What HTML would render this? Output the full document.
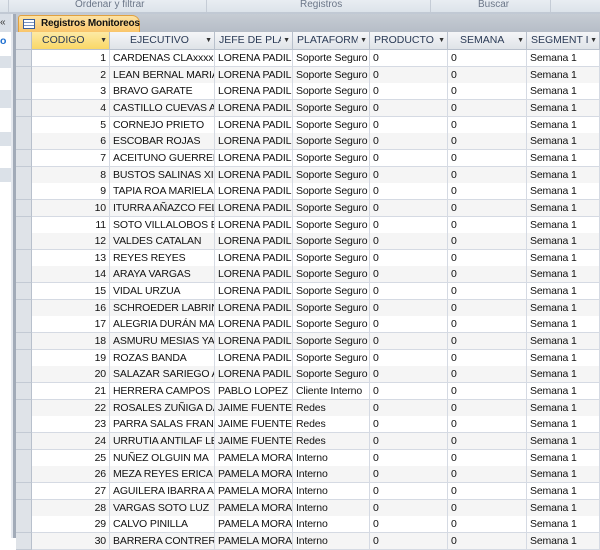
<!DOCTYPE html><html><head><style>
body{margin:0;width:600px;height:538px;overflow:hidden;background:#fff;font-family:"Liberation Sans",sans-serif;font-size:10.5px;position:relative}
div{position:absolute;box-sizing:border-box}
.rib{left:0;top:0;width:600px;height:12px;background:linear-gradient(#e9edf2,#dce3ea);color:#6b7688;font-size:10px}
.cell{height:17px;line-height:16px;border-right:1px solid #d5dae3;border-bottom:1px solid #d5dae3;white-space:nowrap;overflow:hidden;padding-left:3px;color:#111;letter-spacing:-0.15px}
.hd{top:32px;height:18px;line-height:17px;background:linear-gradient(#f5f6f8,#dfe3e8);border-right:1px solid #b8c0cc;border-bottom:1px solid #b8c0cc;color:#2a3a55;white-space:nowrap;overflow:hidden;padding-left:4px;padding-right:12px}
.ar{position:absolute;right:2px;top:0;font-size:7px;color:#333;background:inherit;padding-left:2px}
</style></head><body>
<div class="rib"><span style="position:absolute;left:75px;top:-1px">Ordenar y filtrar</span><span style="position:absolute;left:300px;top:-1px">Registros</span><span style="position:absolute;left:478px;top:-1px">Buscar</span>
<div style="left:8px;top:0;width:1px;height:12px;background:#c5ccd6"></div><div style="left:206px;top:0;width:1px;height:12px;background:#c5ccd6"></div><div style="left:430px;top:0;width:1px;height:12px;background:#c5ccd6"></div><div style="left:550px;top:0;width:1px;height:12px;background:#c5ccd6"></div></div>
<div style="left:0;top:12px;width:600px;height:2px;background:#c1c9d4"></div>
<div style="left:0;top:14px;width:11px;height:524px;background:#fff"></div>
<div style="left:0;top:14px;width:11px;height:18px;background:#d9dfe7;font-size:10px;color:#333;line-height:18px">«</div>
<div style="left:0;top:34px;width:11px;height:14px;color:#1e6fd0;font-weight:bold;line-height:14px">o</div>
<div style="left:0;top:56px;width:11px;height:12px;background:#dbe1e8"></div>
<div style="left:0;top:90px;width:11px;height:18px;background:#dbe1e8"></div>
<div style="left:0;top:132px;width:11px;height:14px;background:#dbe1e8"></div>
<div style="left:0;top:168px;width:11px;height:14px;background:#dbe1e8"></div>
<div style="left:11px;top:14px;width:2px;height:524px;background:#e4e8ee"></div>
<div style="left:13px;top:14px;width:3px;height:524px;background:#a2abb8"></div>
<div style="left:16px;top:14px;width:584px;height:18px;background:linear-gradient(#c6ccd4,#b6bdc7)"></div>
<div style="left:18px;top:15px;width:122px;height:17px;background:linear-gradient(#fde3a4,#f9c56a);border:1px solid #e0a040;border-bottom:none;border-radius:3px 8px 0 0;font-weight:bold;font-size:10px;line-height:15px;padding-left:22px;color:#111;white-space:nowrap;letter-spacing:-0.2px">Registros Monitoreos</div>
<div style="left:23px;top:19px;width:12px;height:10px;border:1px solid #3c5f9a;background:repeating-linear-gradient(#fff 0 2px,#7b95c2 2px 3px)"></div>
<div style="left:16px;top:32px;width:16px;height:18px;background:#dfe3e8;border-right:1px solid #b8c0cc;border-bottom:1px solid #b8c0cc"></div>
<div class="hd" style="left:32px;width:78px;background:linear-gradient(#fdeaa5,#f9d766);padding-left:10px">CODIGO<span class="ar">▼</span></div>
<div class="hd" style="left:110px;width:105px;padding-left:20px">EJECUTIVO<span class="ar">▼</span></div>
<div class="hd" style="left:215px;width:78px">JEFE DE PLA<span class="ar">▼</span></div>
<div class="hd" style="left:293px;width:77px">PLATAFORM<span class="ar">▼</span></div>
<div class="hd" style="left:370px;width:78px">PRODUCTO<span class="ar">▼</span></div>
<div class="hd" style="left:448px;width:79px;padding-left:12px">SEMANA<span class="ar">▼</span></div>
<div class="hd" style="left:527px;width:73px">SEGMENT ID<span class="ar">▼</span></div>
<div id="rows"></div>
<script>
var d=[["CARDENAS CLAxxxx","LORENA PADIL","Soporte Seguro"],["LEAN BERNAL MARIA","LORENA PADIL","Soporte Seguro"],["BRAVO GARATE","LORENA PADIL","Soporte Seguro"],["CASTILLO CUEVAS A","LORENA PADIL","Soporte Seguro"],["CORNEJO PRIETO","LORENA PADIL","Soporte Seguro"],["ESCOBAR ROJAS","LORENA PADIL","Soporte Seguro"],["ACEITUNO GUERRERO","LORENA PADIL","Soporte Seguro"],["BUSTOS SALINAS XI","LORENA PADIL","Soporte Seguro"],["TAPIA ROA MARIELA","LORENA PADIL","Soporte Seguro"],["ITURRA AÑAZCO FEL","LORENA PADIL","Soporte Seguro"],["SOTO VILLALOBOS E","LORENA PADIL","Soporte Seguro"],["VALDES CATALAN","LORENA PADIL","Soporte Seguro"],["REYES REYES","LORENA PADIL","Soporte Seguro"],["ARAYA VARGAS","LORENA PADIL","Soporte Seguro"],["VIDAL URZUA","LORENA PADIL","Soporte Seguro"],["SCHROEDER LABRIN","LORENA PADIL","Soporte Seguro"],["ALEGRIA DURÁN MA","LORENA PADIL","Soporte Seguro"],["ASMURU MESIAS YA","LORENA PADIL","Soporte Seguro"],["ROZAS BANDA","LORENA PADIL","Soporte Seguro"],["SALAZAR SARIEGO A","LORENA PADIL","Soporte Seguro"],["HERRERA CAMPOS","PABLO LOPEZ","Cliente Interno"],["ROSALES ZUÑIGA DA","JAIME FUENTE","Redes"],["PARRA SALAS FRAN","JAIME FUENTE","Redes"],["URRUTIA ANTILAF LE","JAIME FUENTE","Redes"],["NUÑEZ OLGUIN MA","PAMELA MORA","Interno"],["MEZA REYES ERICA D","PAMELA MORA","Interno"],["AGUILERA IBARRA A","PAMELA MORA","Interno"],["VARGAS SOTO LUZ","PAMELA MORA","Interno"],["CALVO PINILLA","PAMELA MORA","Interno"],["BARRERA CONTRERAS","PAMELA MORA","Interno"]];
var h="",cols=[[32,78],[110,105],[215,78],[293,77],[370,78],[448,79],[527,73]];
for(var i=0;i<d.length;i++){var y=50+i*16.65,t=Math.round(y),bg=i%2?"#f5f5f5":"#fff";
h+='<div style="left:16px;top:'+t+'px;width:16px;height:17px;background:#dfe3e8;border-right:1px solid #b8c0cc;border-bottom:1px solid #c3cad4"></div>';
var v=[String(i+1),d[i][0],d[i][1],d[i][2],"0","0","Semana 1"];
for(var j=0;j<7;j++){h+='<div class="cell" style="left:'+cols[j][0]+'px;top:'+t+'px;width:'+cols[j][1]+'px;background:'+bg+';'+(j==0?'text-align:right;padding-right:3px':'')+'">'+v[j]+'</div>';}}
document.getElementById("rows").outerHTML=h;
</script>
</body></html>
